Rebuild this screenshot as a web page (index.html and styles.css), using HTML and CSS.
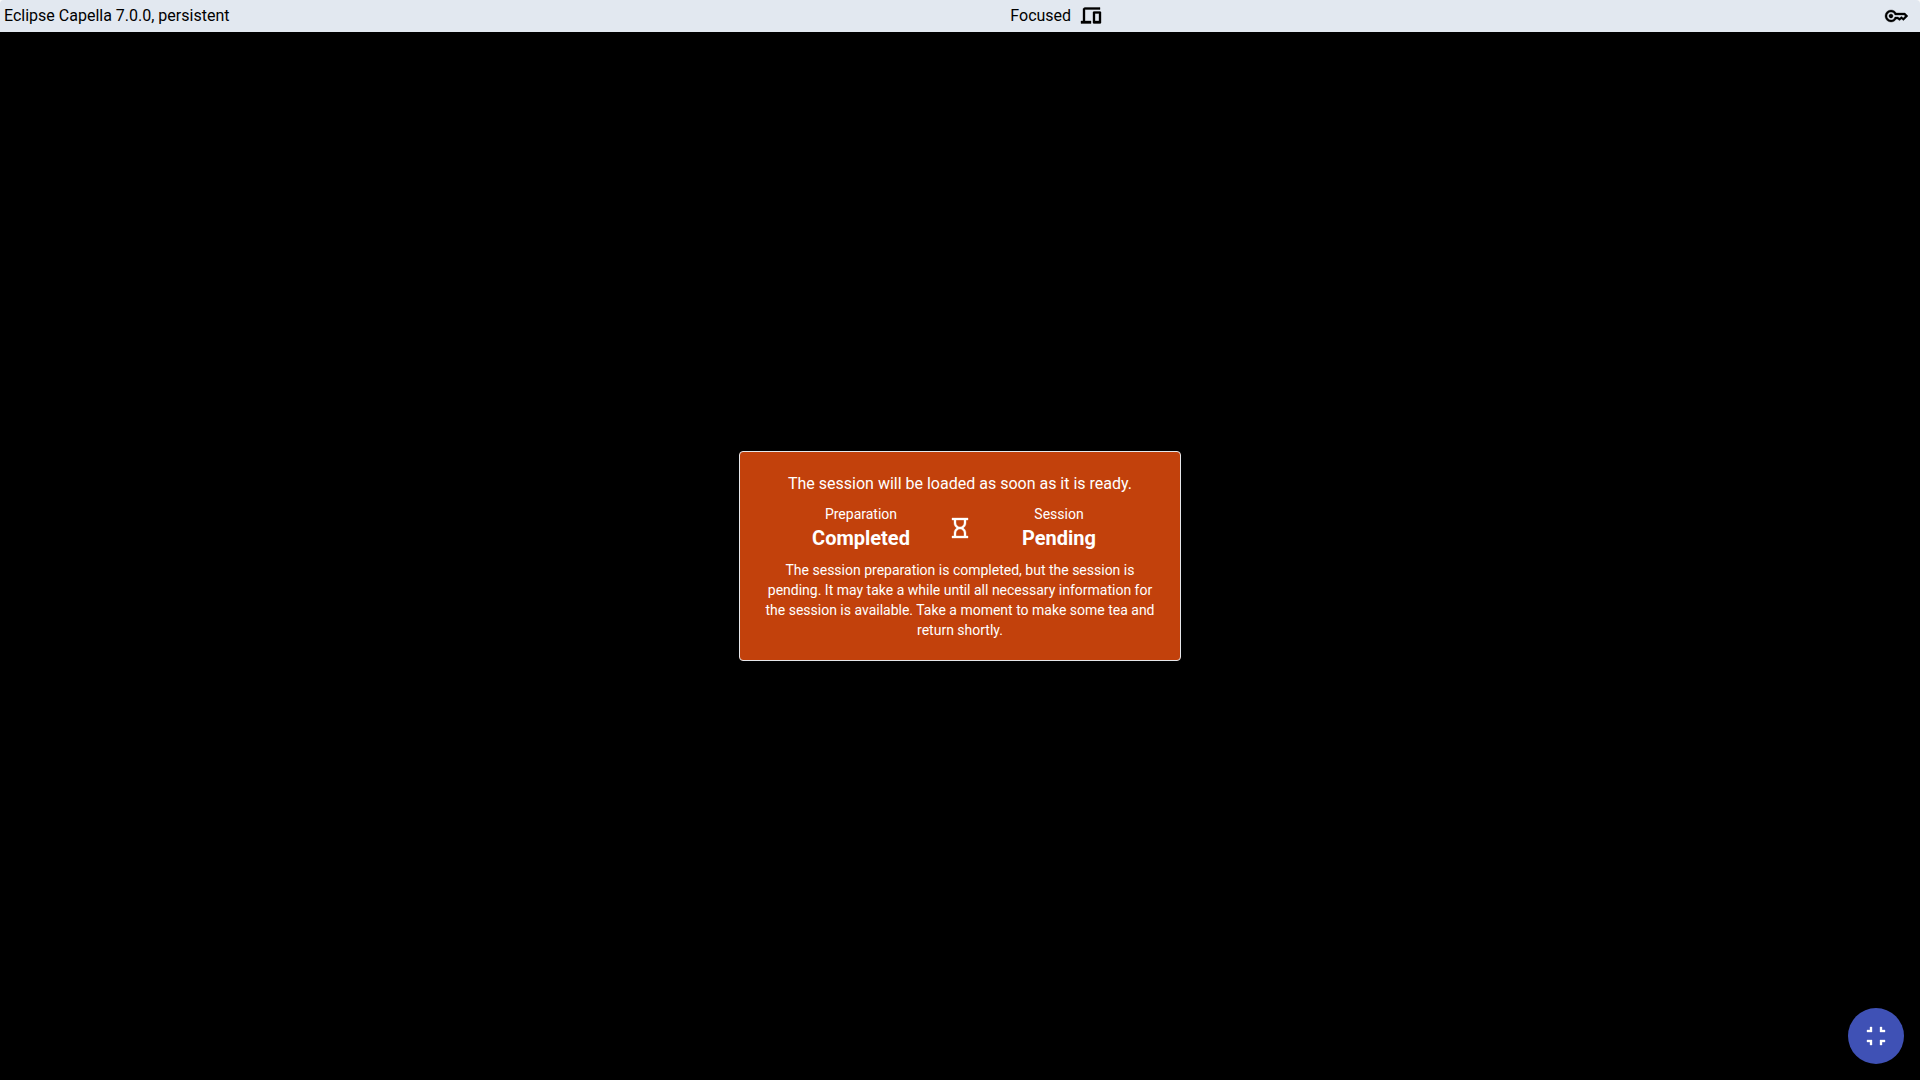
FILE: index.html
```html
<!DOCTYPE html>
<html lang="en">
<head>
<meta charset="utf-8">
<meta name="viewport" content="width=device-width, initial-scale=1">
<title>Session Viewer</title>
<link rel="stylesheet" href="styles.css">
</head>
<body>
<main class="viewer">
  <header class="toolbar">
    <span>Eclipse Capella 7.0.0, persistent</span>
    <div class="focus">
      <span>Focused</span>
      <svg class="icon" viewBox="0 -960 960 960" aria-hidden="true"><path d="M80-180v-100h80v-460q0-33 23.500-56.500T240-820h600v80H240v460h240v100H80Zm520 0q-17 0-28.500-11.500T560-220v-400q0-17 11.500-28.500T600-660h240q17 0 28.500 11.500T880-620v400q0 17-11.500 28.500T840-180H600Zm40-100h160v-300H640v300Z"/></svg>
    </div>
    <button class="key-button" type="button" aria-label="Session token">
      <svg class="icon" viewBox="0 -960 960 960" aria-hidden="true"><path d="M280-400q-33 0-56.500-23.500T200-480q0-33 23.500-56.500T280-560q33 0 56.500 23.500T360-480q0 33-23.500 56.500T280-400Zm0 160q-100 0-170-70T40-480q0-100 70-170t170-70q67 0 121.500 33t86.500 87h352l120 120-180 180-80-60-80 60-85-60h-47q-32 54-86.500 87T280-240Zm0-80q56 0 98.500-34t56.500-86h125l58 41 82-61 71 55 75-75-40-40H435q-14-52-56.500-86T280-640q-66 0-113 47t-47 113q0 66 47 113t113 47Z"/></svg>
    </button>
  </header>
  <section class="stage">
    <article class="card">
      <p class="card-title">The session will be loaded as soon as it is ready.</p>
      <div class="states">
        <div>
          <div class="state-label">Preparation</div>
          <div class="state-value">Completed</div>
        </div>
        <svg class="icon" viewBox="0 -960 960 960" aria-hidden="true"><path d="M320-160h320v-120q0-66-47-113t-113-47q-66 0-113 47t-47 113v120Zm160-360q66 0 113-47t47-113v-120H320v120q0 66 47 113t113 47ZM160-80v-80h80v-120q0-61 28.500-114.500T348-480q-51-32-79.500-85.500T240-680v-120h-80v-80h640v80h-80v120q0 61-28.500 114.500T612-480q51 32 79.500 85.500T720-280v120h80v80H160Z"/></svg>
        <div>
          <div class="state-label">Session</div>
          <div class="state-value">Pending</div>
        </div>
      </div>
      <p class="card-text">The session preparation is completed, but the session is pending. It may take a while until all necessary information for the session is available. Take a moment to make some tea and return shortly.</p>
    </article>
  </section>
</main>
<button class="fab" type="button" aria-label="Exit fullscreen">
  <svg class="icon" viewBox="0 -960 960 960" aria-hidden="true"><path d="M240-120v-120H120v-80h200v200h-80Zm400 0v-200h200v80H720v120h-80ZM120-640v-80h120v-120h80v200H120Zm520 0v-200h80v120h120v80H640Z"/></svg>
</button>
</body>
</html>
```
FILE: styles.css
```css
* {
  box-sizing: border-box;
}

body {
  margin: 0;
  background: #fafafa;
  color: #000;
  font-family: Roboto, "Liberation Sans", sans-serif;
  font-size: 16px;
  line-height: 24px;
}

p {
  margin: 0;
}

.icon {
  display: block;
  flex: none;
  width: 24px;
  height: 24px;
  fill: currentColor;
  stroke: currentColor;
  stroke-width: 14;
}

.viewer {
  display: flex;
  flex-direction: column;
  min-height: 100vh;
}

.toolbar {
  display: flex;
  align-items: center;
  justify-content: space-between;
  padding: 4px;
  border-radius: 4px 4px 0 0;
  background: #e2e8f0;
}

.focus {
  display: flex;
  align-items: center;
  gap: 8px;
}

.key-button {
  padding: 0 8px 0 0;
  border: 0;
  background: none;
  color: inherit;
  cursor: pointer;
}

.stage {
  display: flex;
  flex: 1;
  align-items: center;
  justify-content: center;
  background: #000;
}

.card {
  display: flex;
  flex-direction: column;
  gap: 8px;
  max-width: 442px;
  padding: 20px;
  border: 1px solid #e5e7eb;
  border-radius: 4px;
  background: #c2410c;
  color: #fff;
  text-align: center;
}

.states {
  display: grid;
  grid-template-columns: 1fr 24px 1fr;
  align-items: center;
  gap: 10px;
  padding: 0 24px;
}

.state-label,
.card-text {
  font-size: 14px;
  line-height: 20px;
}

.state-value {
  font-size: 20px;
  font-weight: 700;
  line-height: 28px;
}

.fab {
  position: fixed;
  right: 16px;
  bottom: 16px;
  display: flex;
  align-items: center;
  justify-content: center;
  width: 56px;
  height: 56px;
  padding: 0;
  border: 0;
  border-radius: 50%;
  background: #3f51b5;
  color: #fff;
  cursor: pointer;
}
```
